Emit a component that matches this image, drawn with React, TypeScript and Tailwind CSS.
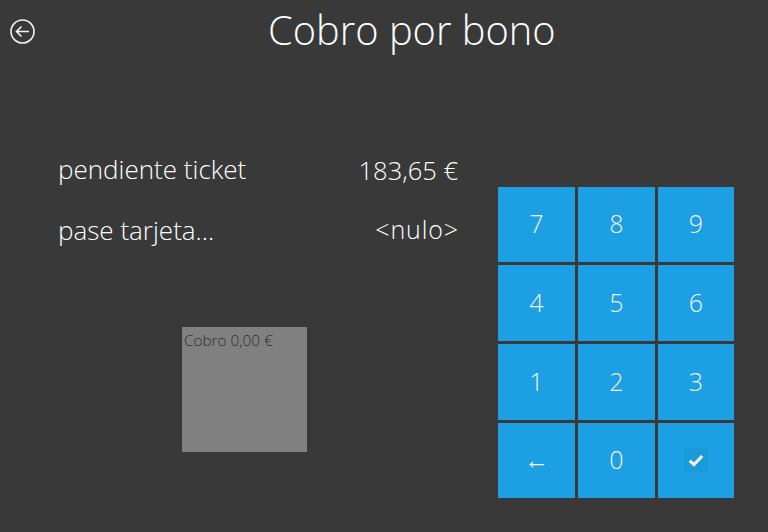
const keys = ["7", "8", "9", "4", "5", "6", "1", "2", "3", "←", "0", "check"];
const font = { fontFamily: '"Open Sans", sans-serif' };

function Check() {
  return (
    <span className="flex h-6 w-6 items-center justify-center bg-[#1c99d9]">
      <svg width="16" height="13" viewBox="0 0 16 13">
        <path d="M1.8 6.8 L6 10.6 L14.2 2" fill="none" stroke="#f4f4f4" strokeWidth="3.2" />
      </svg>
    </span>
  );
}

export default function App() {
  return (
    <div className="flex h-[532px] w-[768px] flex-col overflow-hidden bg-[#393939] text-white" style={font}>
      <header className="flex h-[60px] shrink-0 items-center pl-[10px]">
        <svg width="25" height="25" viewBox="0 0 25 25" fill="none" stroke="#f2f2f2" strokeWidth="1.6" className="mt-[3px]">
          <circle cx="12.5" cy="12.5" r="11.5" />
          <path d="M19 12.5 H6.5 M11.5 7.5 L6.5 12.5 L11.5 17.5" />
        </svg>
        <h1 className="ml-[233px] text-[39.8px] font-light leading-none">Cobro por bono</h1>
      </header>
      <main className="flex flex-1">
        <section className="w-[498px] shrink-0 pl-[58px] pt-[93px]">
          <div className="flex h-[34px] w-[400px] items-center justify-between text-[25.5px] font-light">
            <span className="-mt-[1px] text-[26px]">pendiente ticket</span>
            <span>183,65 €</span>
          </div>
          <div className="mt-[26px] flex h-[34px] w-[401px] items-center justify-between text-[25px] font-light">
            <span className="text-[26px]">pase tarjeta...</span>
            <span className="tracking-[0.9px]">&lt;nulo&gt;</span>
          </div>
          <div className="ml-[124px] mt-[80px] h-[125px] w-[125px] bg-[#808080] px-[2px] pt-[3px] text-[15.3px] font-light leading-[20px] text-[#2e2e2e]">
            Cobro 0,00 €
          </div>
        </section>
        <section className="mt-[127px] grid h-[311px] w-[236px] grid-cols-[77px_77px_76px] grid-rows-[75px_76px_76px_75px] gap-x-[3px] gap-y-[3px]">
          {keys.map((k) => (
            <button key={k} className="flex items-center justify-center bg-[#1c9fe3] pb-[1px] text-[25px] font-light text-[#f2f2f2]">
              {k === "check" ? <Check /> : k}
            </button>
          ))}
        </section>
      </main>
    </div>
  );
}
